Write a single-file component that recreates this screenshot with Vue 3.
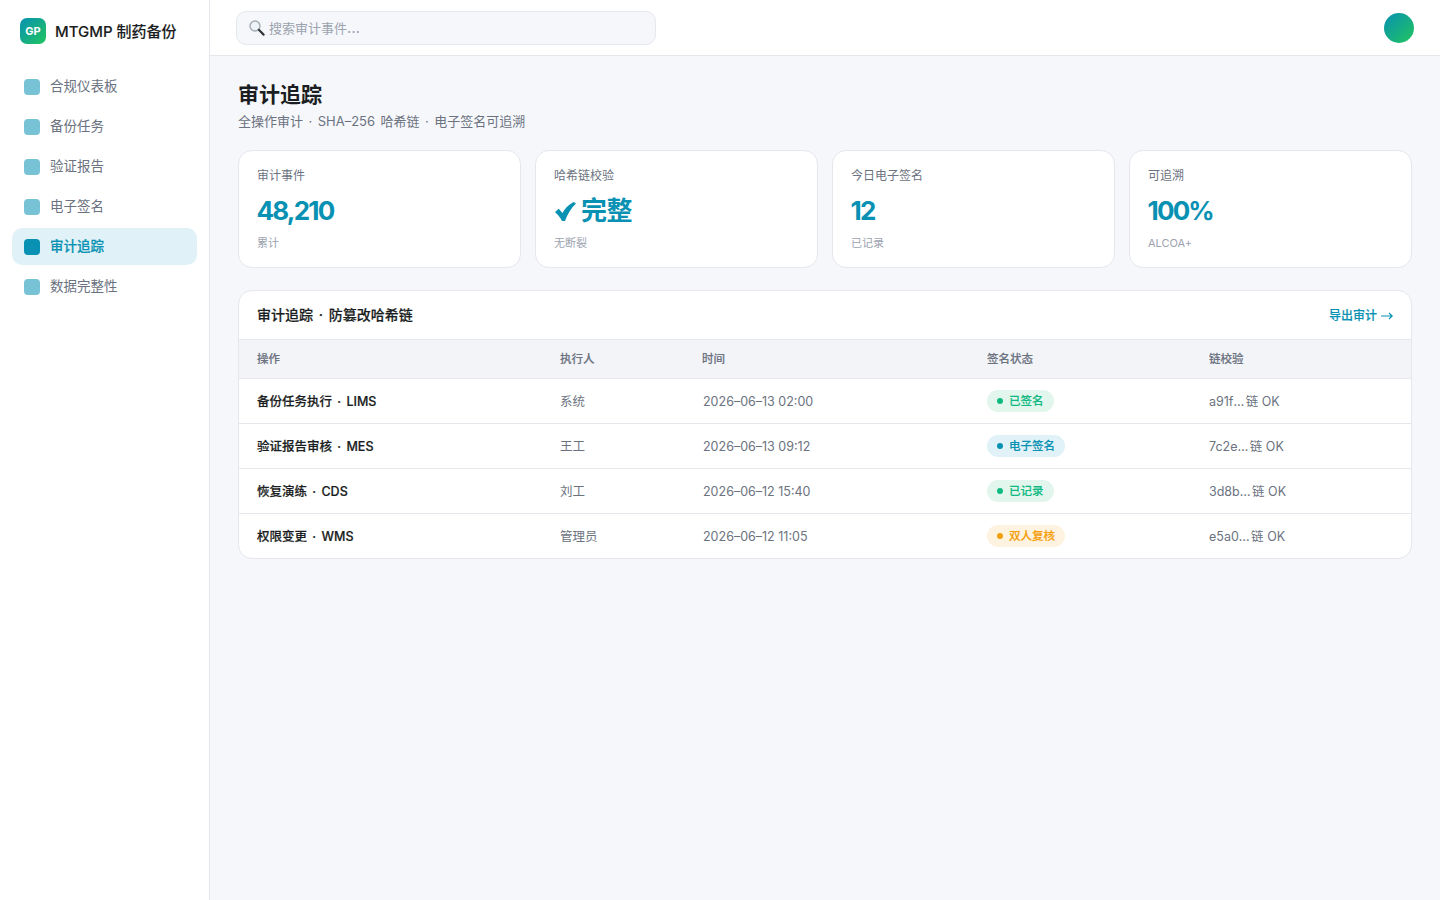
<script setup>
import { ref } from 'vue';

const navItems = ref([
  { label: '合规仪表板' },
  { label: '备份任务' },
  { label: '验证报告' },
  { label: '电子签名' },
  { label: '审计追踪', active: true },
  { label: '数据完整性' }
]);

const stats = ref([
  { label: '审计事件', value: '48,210', note: '累计' },
  { label: '哈希链校验', value: '完整', check: true, note: '无断裂' },
  { label: '今日电子签名', value: '12', note: '已记录' },
  { label: '可追溯', value: '100%', note: 'ALCOA+' }
]);

const rows = ref([
  { op: '备份任务执行 · LIMS', who: '系统', time: '2026–06–13 02:00', status: '已签名', tone: 'green', hash: 'a91f' },
  { op: '验证报告审核 · MES', who: '王工', time: '2026–06–13 09:12', status: '电子签名', tone: 'blue', hash: '7c2e' },
  { op: '恢复演练 · CDS', who: '刘工', time: '2026–06–12 15:40', status: '已记录', tone: 'green', hash: '3d8b' },
  { op: '权限变更 · WMS', who: '管理员', time: '2026–06–12 11:05', status: '双人复核', tone: 'orange', hash: 'e5a0' }
]);
</script>

<template>
  <div class="app">
    <aside class="sidebar">
      <div class="brand">
        <div class="logo">GP</div>
        <span class="brand-name">MTGMP 制药备份</span>
      </div>
      <nav class="nav">
        <a
          v-for="item in navItems"
          :key="item.label"
          class="nav-item"
          :class="{ active: item.active }"
        >
          <span class="nav-icon"></span>
          {{ item.label }}
        </a>
      </nav>
    </aside>

    <div class="main">
      <header class="topbar">
        <div class="search">
          <svg class="search-icon" width="18" height="18" viewBox="0 0 18 18">
            <circle cx="7" cy="7" r="5" fill="#eef3f8" stroke="#a3abb3" stroke-width="1.4" />
            <path d="M10.8 10.8 L15.6 15.6" stroke="#33383d" stroke-width="2.2" stroke-linecap="round" />
          </svg>
          <span>搜索审计事件<span class="search-dots">…</span></span>
        </div>
        <div class="avatar"></div>
      </header>

      <main class="content">
        <h1 class="title">审计追踪</h1>
        <p class="subtitle">全操作审计 · SHA–256 哈希链 · 电子签名可追溯</p>

        <section class="stats">
          <div v-for="stat in stats" :key="stat.label" class="stat">
            <div class="stat-label">{{ stat.label }}</div>
            <div class="stat-value" :class="{ word: stat.check }">
              <svg v-if="stat.check" class="check" width="21" height="19" viewBox="0 0 21 19">
                <path d="M0 10 L3.8 6.8 L7.4 11 C10 6.5 13.5 2.5 18.6 0 L21 1.6 C16 6.5 12.5 12 10 19 L7 19 C5 15 2.8 12.5 0 10 Z" fill="#0891b2" />
              </svg>
              {{ stat.value }}
            </div>
            <div class="stat-note">{{ stat.note }}</div>
          </div>
        </section>

        <section class="panel">
          <div class="panel-head">
            <h2>审计追踪 · 防篡改哈希链</h2>
            <a class="export">
              导出审计
              <svg width="12" height="8" viewBox="0 0 12 8">
                <path d="M0 4 H11 M8 1 L11.2 4 L8 7" fill="none" stroke="#0891b2" stroke-width="1.2" />
              </svg>
            </a>
          </div>
          <table class="table">
            <colgroup>
              <col class="col-op" />
              <col class="col-who" />
              <col class="col-time" />
              <col class="col-status" />
              <col />
            </colgroup>
            <thead>
              <tr>
                <th>操作</th>
                <th>执行人</th>
                <th>时间</th>
                <th>签名状态</th>
                <th>链校验</th>
              </tr>
            </thead>
            <tbody>
              <tr v-for="row in rows" :key="row.op">
                <td class="op">{{ row.op }}</td>
                <td>{{ row.who }}</td>
                <td class="time">{{ row.time }}</td>
                <td class="status">
                  <span class="badge" :class="row.tone"><i class="dot"></i>{{ row.status }}</span>
                </td>
                <td>{{ row.hash }}<span class="ellipsis">…</span>链 OK</td>
              </tr>
            </tbody>
          </table>
        </section>
      </main>
    </div>
  </div>
</template>

<style>
body {
  margin: 0;
  background: #f6f7fb;
}
</style>

<style scoped>
.app {
  display: flex;
  min-height: 900px;
  background: #f6f7fb;
  color: #1a1d21;
  font-family: Inter, "Noto Sans CJK SC", sans-serif;
  line-height: 18px;
}

/* ===== SIDEBAR ===== */
.sidebar {
  width: 210px;
  flex-shrink: 0;
  box-sizing: border-box;
  background: #fff;
  border-right: 1px solid #e5e7ec;
}

.brand {
  display: flex;
  align-items: center;
  gap: 9px;
  padding: 18px 20px 0;
  height: 26px;
  margin-bottom: 24px;
}

.logo {
  width: 26px;
  height: 26px;
  border-radius: 7px;
  background: linear-gradient(135deg, #0891b2, #22c55e);
  color: #fff;
  font-size: 11px;
  font-weight: 700;
  display: grid;
  place-content: center;
}

.brand-name {
  padding-top: 2px;
  font-size: 15px;
  font-weight: 500;
  white-space: nowrap;
  -webkit-text-stroke: 0.1px currentColor;
}

.nav {
  display: flex;
  flex-direction: column;
  gap: 3px;
  padding: 0 12px;
}

.nav-item {
  display: flex;
  align-items: center;
  gap: 10px;
  height: 37px;
  padding: 0 12px;
  border-radius: 10px;
  font-size: 13.5px;
  line-height: 17px;
  color: #6b7280;
}

.nav-icon {
  width: 16px;
  height: 16px;
  border-radius: 4px;
  background: #0891b2;
  opacity: 0.55;
}

.nav-item.active {
  background: #e0f2f7;
  color: #0891b2;
  font-weight: 500;
  -webkit-text-stroke: 0.2px currentColor;
}

.nav-item.active .nav-icon {
  opacity: 1;
}

/* ===== TOPBAR ===== */
.main {
  flex: 1;
  min-width: 0;
}

.topbar {
  height: 56px;
  box-sizing: border-box;
  background: #fff;
  border-bottom: 1px solid #e5e7ec;
  display: flex;
  align-items: center;
  justify-content: space-between;
  padding: 0 26px;
}

.search {
  width: 420px;
  height: 34px;
  box-sizing: border-box;
  display: flex;
  align-items: center;
  gap: 3px;
  padding: 0 11px;
  background: #f6f7fb;
  border: 1px solid #e5e7ec;
  border-radius: 10px;
  font-size: 13px;
  color: #9ca3af;
}

.search-dots {
  font-size: 15px;
}

.avatar {
  width: 30px;
  height: 30px;
  border-radius: 50%;
  background: linear-gradient(135deg, #0891b2, #22c55e);
}

/* ===== CONTENT ===== */
.content {
  padding: 24px 28px;
}

.title {
  margin: 0;
  font-size: 21px;
  line-height: 30px;
  font-weight: 700;
}

.subtitle {
  margin: 1px 0 0;
  font-size: 13px;
  line-height: 20px;
  color: #6b7280;
  word-spacing: 1.8px;
}

.stats {
  display: grid;
  grid-template-columns: repeat(4, 1fr);
  gap: 14px;
  margin-top: 19px;
}

.stat {
  height: 118px;
  box-sizing: border-box;
  padding: 17px 18px;
  background: #fff;
  border: 1px solid #e5e7ec;
  border-radius: 14px;
}

.stat-label {
  font-size: 12px;
  line-height: 16px;
  color: #6b7280;
}

.stat-value {
  display: flex;
  align-items: center;
  gap: 5px;
  margin-top: 9px;
  margin-left: -0.5px;
  font-size: 26px;
  line-height: 36px;
  font-weight: 700;
  letter-spacing: -1.8px;
  color: #0891b2;
}

.stat-value.word {
  margin-left: 0;
  letter-spacing: -0.5px;
}

.check {
  margin-left: 1px;
}

.stat-note {
  margin-top: 6px;
  font-size: 11px;
  line-height: 16px;
  color: #9ca3af;
}

/* ===== TABLE ===== */
.panel {
  margin-top: 22px;
  background: #fff;
  border: 1px solid #e5e7ec;
  border-radius: 14px;
  overflow: hidden;
}

.panel-head {
  height: 48px;
  box-sizing: border-box;
  display: flex;
  align-items: center;
  justify-content: space-between;
  padding: 0 18px;
}

.panel-head h2 {
  margin: 0;
  font-size: 14px;
  font-weight: 500;
  word-spacing: 2px;
  -webkit-text-stroke: 0.2px currentColor;
}

.export {
  display: flex;
  align-items: center;
  gap: 4px;
  padding-top: 2px;
  font-size: 12px;
  font-weight: 500;
  color: #0891b2;
  -webkit-text-stroke: 0.15px currentColor;
}

.table {
  width: 100%;
  border-collapse: collapse;
  table-layout: fixed;
}

.col-op {
  width: 303px;
}

.col-who {
  width: 142px;
}

.col-time {
  width: 285px;
}

.col-status {
  width: 222px;
}

.table th {
  height: 39px;
  padding: 0 18px;
  box-sizing: border-box;
  text-align: left;
  font-size: 11.5px;
  font-weight: 500;
  color: #6b7280;
  background: #f3f4f8;
  border-top: 1px solid #e5e7ec;
  border-bottom: 1px solid #e5e7ec;
  -webkit-text-stroke: 0.15px currentColor;
}

.table td {
  height: 45px;
  padding: 2px 18px 0;
  box-sizing: border-box;
  font-size: 12.5px;
  color: #6b7280;
  border-bottom: 1px solid #e5e7ec;
}

.table tr:last-child td {
  height: 44px;
  border-bottom: none;
}

.table td.op {
  font-weight: 500;
  color: #1a1d21;
  word-spacing: 2px;
  -webkit-text-stroke: 0.2px currentColor;
}

.table td.time {
  padding-left: 19px;
}

.table td.status {
  padding-top: 0;
}

.ellipsis {
  letter-spacing: 1.5px;
}

.badge {
  display: inline-flex;
  align-items: center;
  gap: 6px;
  height: 22px;
  padding: 0 10px;
  border-radius: 11px;
  font-size: 11.5px;
  font-weight: 500;
  vertical-align: middle;
  -webkit-text-stroke: 0.15px currentColor;
}

.dot {
  width: 6px;
  height: 6px;
  border-radius: 50%;
  background: currentColor;
}

.badge.green {
  background: #e2f6ee;
  color: #10b981;
}

.badge.blue {
  background: #e0f2f7;
  color: #0891b2;
}

.badge.orange {
  background: #fef3e0;
  color: #f59e0b;
}
</style>
